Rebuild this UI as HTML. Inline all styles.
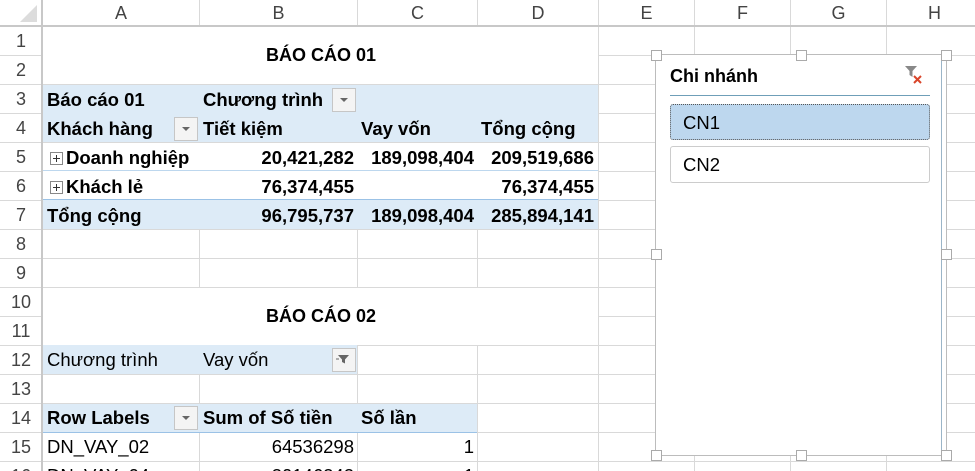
<!DOCTYPE html>
<html><head><meta charset="utf-8"><style>
html,body{margin:0;width:975px;height:471px;overflow:hidden}
body{background:#fff;font-family:"Liberation Sans",Arial,sans-serif;position:relative}
.a{position:absolute;box-sizing:border-box}
.vl{position:absolute;top:0;width:1px;height:471px;background:#d9d9d9}
.hl{position:absolute;left:0;width:975px;height:1px;background:#d9d9d9}
.rh{position:absolute;left:0;width:42px;text-align:center;font-size:18px;color:#444;height:29px;line-height:29px}
.ch{position:absolute;top:0;height:26px;line-height:26px;text-align:center;font-size:18px;color:#444}
.t{position:absolute;font-size:18.5px;height:29px;line-height:29px;white-space:nowrap;color:#000}
.b{font-weight:bold}
.r{text-align:right}
.dd{position:absolute;width:22px;height:22px;border:1px solid #c6c6c6;background:#f4f4f4}
.dd.x:after{content:"";position:absolute;left:7px;top:9px;border-left:4px solid transparent;border-right:4px solid transparent;border-top:4px solid #666}
.pl{display:inline-block;width:11px;height:11px;border:1px solid #888;margin-right:3px;position:relative;top:1px;background:#fff}
.pl:before{content:"";position:absolute;left:2px;top:5px;width:7px;height:1px;background:#333}
.pl:after{content:"";position:absolute;left:5px;top:2px;width:1px;height:7px;background:#333}
.hd{position:absolute;width:9px;height:9px;border:1px solid #aaa;background:#fff}
</style></head><body>
<div class="vl" style="left:42px"></div>
<div class="vl" style="left:199px"></div>
<div class="vl" style="left:357px"></div>
<div class="vl" style="left:477px"></div>
<div class="vl" style="left:598px"></div>
<div class="vl" style="left:694px"></div>
<div class="vl" style="left:790px"></div>
<div class="vl" style="left:886px"></div>
<div class="hl" style="top:26px"></div>
<div class="hl" style="top:55px"></div>
<div class="hl" style="top:84px"></div>
<div class="hl" style="top:113px"></div>
<div class="hl" style="top:142px"></div>
<div class="hl" style="top:171px"></div>
<div class="hl" style="top:200px"></div>
<div class="hl" style="top:229px"></div>
<div class="hl" style="top:258px"></div>
<div class="hl" style="top:287px"></div>
<div class="hl" style="top:316px"></div>
<div class="hl" style="top:345px"></div>
<div class="hl" style="top:374px"></div>
<div class="hl" style="top:403px"></div>
<div class="hl" style="top:432px"></div>
<div class="hl" style="top:461px"></div>
<div class="a" style="left:0;top:0;width:42px;height:26px;background:#fff"></div>
<svg class="a" style="left:20px;top:5px" width="18" height="18"><polygon points="17,0 17,17 0,17" fill="#dcdcdc"/></svg>
<div class="a" style="left:41px;top:0;width:2px;height:471px;background:#c8c8c8"></div>
<div class="a" style="left:0;top:25px;width:975px;height:2px;background:#c8c8c8"></div>
<div class="ch" style="left:43px;width:156px">A</div>
<div class="ch" style="left:200px;width:157px">B</div>
<div class="ch" style="left:358px;width:119px">C</div>
<div class="ch" style="left:478px;width:120px">D</div>
<div class="ch" style="left:599px;width:95px">E</div>
<div class="ch" style="left:695px;width:95px">F</div>
<div class="ch" style="left:791px;width:95px">G</div>
<div class="ch" style="left:887px;width:95px">H</div>
<div class="rh" style="top:27px">1</div><div class="rh" style="top:56px">2</div><div class="rh" style="top:85px">3</div><div class="rh" style="top:114px">4</div><div class="rh" style="top:143px">5</div><div class="rh" style="top:172px">6</div><div class="rh" style="top:201px">7</div><div class="rh" style="top:230px">8</div><div class="rh" style="top:259px">9</div><div class="rh" style="top:288px">10</div><div class="rh" style="top:317px">11</div><div class="rh" style="top:346px">12</div><div class="rh" style="top:375px">13</div><div class="rh" style="top:404px">14</div><div class="rh" style="top:433px">15</div><div class="rh" style="top:462px">16</div>
<div class="a" style="left:43px;top:27px;width:555px;height:57px;background:#fff"></div>
<div class="a" style="left:43px;top:288px;width:555px;height:57px;background:#fff"></div>
<div class="a" style="left:43px;top:85px;width:555px;height:57px;background:#ddebf7"></div>
<div class="a" style="left:43px;top:143px;width:555px;height:57px;background:#fff;border-bottom:1px solid #9bc2e6"></div>
<div class="a" style="left:43px;top:170px;width:555px;height:1px;background:#bdd7ee"></div>
<div class="a" style="left:43px;top:200px;width:555px;height:29px;background:#ddebf7"></div>
<div class="t b" style="left:44px;top:41px;width:554px;text-align:center;font-size:18px">BÁO CÁO 01</div>
<div class="t b" style="left:47px;top:85px">Báo cáo 01</div>
<div class="t b" style="left:203px;top:85px">Chương trình</div>
<div class="dd x" style="left:332px;top:88px"></div>
<div class="t b" style="left:47px;top:114px">Khách hàng</div>
<div class="dd x" style="left:174px;top:117px"></div>
<div class="t b" style="left:203px;top:114px">Tiết kiệm</div>
<div class="t b" style="left:361px;top:114px">Vay vốn</div>
<div class="t b" style="left:481px;top:114px">Tổng cộng</div>
<div class="t b" style="left:50px;top:143px"><span class="pl"></span>Doanh nghiệp</div>
<div class="t b r" style="left:200px;top:143px;width:154px">20,421,282</div>
<div class="t b r" style="left:357px;top:143px;width:117px">189,098,404</div>
<div class="t b r" style="left:477px;top:143px;width:117px">209,519,686</div>
<div class="t b" style="left:50px;top:172px"><span class="pl"></span>Khách lẻ</div>
<div class="t b r" style="left:200px;top:172px;width:154px">76,374,455</div>
<div class="t b r" style="left:477px;top:172px;width:117px">76,374,455</div>
<div class="t b" style="left:47px;top:201px">Tổng cộng</div>
<div class="t b r" style="left:200px;top:201px;width:154px">96,795,737</div>
<div class="t b r" style="left:357px;top:201px;width:117px">189,098,404</div>
<div class="t b r" style="left:477px;top:201px;width:117px">285,894,141</div>
<div class="t b" style="left:44px;top:302px;width:554px;text-align:center;font-size:18px">BÁO CÁO 02</div>
<div class="a" style="left:43px;top:345px;width:314px;height:29px;background:#ddebf7"></div>
<div class="t" style="left:47px;top:345px">Chương trình</div>
<div class="t" style="left:203px;top:345px">Vay vốn</div>
<div class="dd" style="left:332px;top:348px"><svg width="20" height="20" style="position:absolute;left:0;top:0"><path d="M5 6h11l-4 4.5v4l-3-1.5v-2.5z" fill="#666"/><path d="M3 10h3" stroke="#666"/></svg></div>
<div class="a" style="left:43px;top:404px;width:434px;height:28px;background:#ddebf7"></div>
<div class="t b" style="left:47px;top:403px">Row Labels</div>
<div class="dd x" style="left:174px;top:406px"></div>
<div class="t b" style="left:203px;top:403px">Sum of Số tiền</div>
<div class="t b" style="left:361px;top:403px">Số lần</div>
<div class="a" style="left:43px;top:432px;width:434px;height:1px;background:#9bc2e6"></div>
<div class="t" style="left:47px;top:432px">DN_VAY_02</div>
<div class="t r" style="left:200px;top:432px;width:154px">64536298</div>
<div class="t r" style="left:357px;top:432px;width:117px">1</div>
<div class="t" style="left:47px;top:461px">DN_VAY_04</div>
<div class="t r" style="left:200px;top:461px;width:154px">30146242</div>
<div class="t r" style="left:357px;top:461px;width:117px">1</div>
<div class="a" style="left:655px;top:54px;width:292px;height:402px;border:1px solid #bcbcbc;background:#fff"></div>
<div class="a" style="left:660px;top:59px;width:282px;height:392px;border-right:1px solid #9bb5c8;background:#fff"></div>
<div class="hd" style="left:651px;top:50px"></div><div class="hd" style="left:796px;top:50px"></div><div class="hd" style="left:941px;top:50px"></div>
<div class="hd" style="left:651px;top:249px"></div><div class="hd" style="left:941px;top:249px"></div>
<div class="hd" style="left:651px;top:450px"></div><div class="hd" style="left:796px;top:450px"></div><div class="hd" style="left:941px;top:450px"></div>
<div class="t b" style="left:670px;top:62px;font-size:18px">Chi nhánh</div>
<div class="a" style="left:904px;top:65px"><svg width="20" height="20"><path d="M1 1h12l-4.5 5v6l-3-2V6z" fill="#888"/><path d="M10 11l7 7M17 11l-7 7" stroke="#d9452a" stroke-width="2"/></svg></div>
<div class="a" style="left:670px;top:95px;width:260px;height:1px;background:#6f9fb8"></div>
<div class="a" style="left:670px;top:104px;width:260px;height:36px;background:#bdd7ee;border:1px dotted #555;border-radius:3px"></div>
<div class="t" style="left:683px;top:108px;font-size:18.5px">CN1</div>
<div class="a" style="left:670px;top:146px;width:260px;height:37px;background:#fff;border:1px solid #ccc;border-radius:3px"></div>
<div class="t" style="left:683px;top:150px;font-size:18.5px">CN2</div>
</body></html>
